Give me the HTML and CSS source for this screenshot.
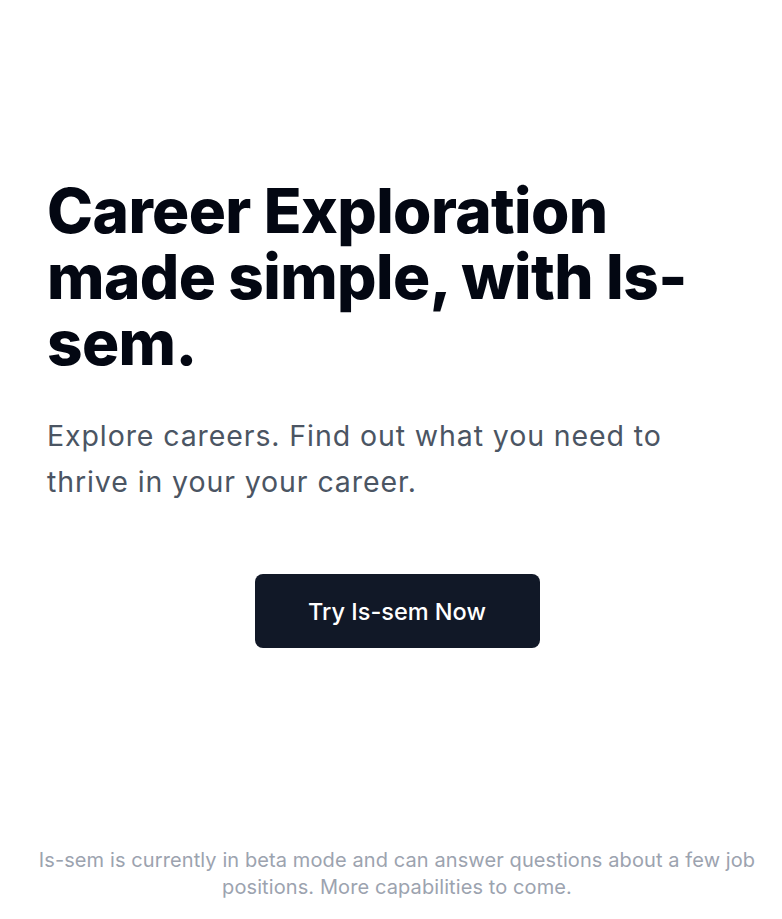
FILE: index.html
```html
<!DOCTYPE html>
<html lang="en">
<head>
<meta charset="utf-8">
<title>Is-sem</title>
<link rel="stylesheet" href="styles.css">
</head>
<body>
<main class="page">
  <section class="hero">
    <h1 class="title">Career Exploration made simple, with Is-sem.</h1>
    <p class="lead">Explore careers. Find out what you need to thrive in your your career.</p>
    <div class="cta-row">
      <a class="cta" href="#">Try Is-sem Now</a>
    </div>
  </section>
  <footer class="note">Is-sem is currently in beta mode and can answer questions about a few job positions. More capabilities to come.</footer>
</main>
</body>
</html>
```

FILE: styles.css
```css
* { box-sizing: border-box; }
html, body { margin: 0; padding: 0; background: #fff; }
body { font-family: Inter, "Noto Sans", sans-serif; }
.page {
  min-height: 919px;
  display: flex;
  flex-direction: column;
  padding: 178px 0 0 0;
}
.hero { padding: 0 48px 0 47px; }
.title {
  margin: 0;
  font-size: 62px;
  line-height: 66px;
  font-weight: 800;
  letter-spacing: -0.6px;
  color: #030712;
}
.lead {
  margin: 37px 0 0 0;
  font-size: 28.5px;
  line-height: 46px;
  letter-spacing: 0.9px;
  color: #4b5563;
  max-width: 660px;
}
.cta-row {
  display: flex;
  justify-content: center;
  margin-top: 69px;
  padding-left: 13px;
}
.cta {
  display: flex;
  align-items: center;
  justify-content: center;
  width: 285px;
  height: 74px;
  border-radius: 8px;
  background: #111827;
  color: #fff;
  text-decoration: none;
  font-size: 23.5px;
  font-weight: 500;
}
.note {
  margin-top: auto;
  padding: 0 20px 18px 32px;
  text-align: center;
  font-size: 20px;
  line-height: 27px;
  letter-spacing: 0.1px;
  color: #9ca3af;
}
```
